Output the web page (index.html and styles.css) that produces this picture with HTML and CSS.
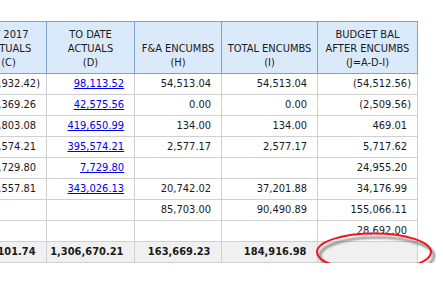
FILE: index.html
```html
<!DOCTYPE html>
<html lang="en">
<head>
    <meta charset="UTF-8" />
    <title>Budget Report</title>
    <link rel="stylesheet" href="styles.css">
</head>
<body>
    <div class="report">
        <table class="grid">
            <colgroup>
                <col class="c0">
                <col class="c1">
                <col class="c2">
                <col class="c3">
                <col class="c4">
            </colgroup>
            <thead>
                <tr>
                    <th>FY 2017<br>ACTUALS<br>(C)</th>
                    <th>TO DATE<br>ACTUALS<br>(D)</th>
                    <th>F&amp;A ENCUMBS<br>(H)</th>
                    <th>TOTAL ENCUMBS<br>(I)</th>
                    <th>BUDGET BAL<br>AFTER ENCUMBS<br>(J=A-D-I)</th>
                </tr>
            </thead>
            <tbody>
                <tr>
                    <td>(10,932.42)</td>
                    <td><a href="#">98,113.52</a><span class="sp">)</span></td>
                    <td>54,513.04<span class="sp">)</span></td>
                    <td>54,513.04<span class="sp">)</span></td>
                    <td>(54,512.56)</td>
                </tr>
                <tr>
                    <td>40,369.26<span class="sp">)</span></td>
                    <td><a href="#">42,575.56</a><span class="sp">)</span></td>
                    <td>0.00<span class="sp">)</span></td>
                    <td>0.00<span class="sp">)</span></td>
                    <td>(2,509.56)</td>
                </tr>
                <tr>
                    <td>19,803.08<span class="sp">)</span></td>
                    <td><a href="#">419,650.99</a><span class="sp">)</span></td>
                    <td>134.00<span class="sp">)</span></td>
                    <td>134.00<span class="sp">)</span></td>
                    <td>469.01<span class="sp">)</span></td>
                </tr>
                <tr>
                    <td>95,574.21<span class="sp">)</span></td>
                    <td><a href="#">395,574.21</a><span class="sp">)</span></td>
                    <td>2,577.17<span class="sp">)</span></td>
                    <td>2,577.17<span class="sp">)</span></td>
                    <td>5,717.62<span class="sp">)</span></td>
                </tr>
                <tr>
                    <td>7,729.80<span class="sp">)</span></td>
                    <td><a href="#">7,729.80</a><span class="sp">)</span></td>
                    <td></td>
                    <td></td>
                    <td>24,955.20<span class="sp">)</span></td>
                </tr>
                <tr>
                    <td>43,557.81<span class="sp">)</span></td>
                    <td><a href="#">343,026.13</a><span class="sp">)</span></td>
                    <td>20,742.02<span class="sp">)</span></td>
                    <td>37,201.88<span class="sp">)</span></td>
                    <td>34,176.99<span class="sp">)</span></td>
                </tr>
                <tr>
                    <td></td>
                    <td></td>
                    <td>85,703.00<span class="sp">)</span></td>
                    <td>90,490.89<span class="sp">)</span></td>
                    <td>155,066.11<span class="sp">)</span></td>
                </tr>
                <tr>
                    <td></td>
                    <td></td>
                    <td></td>
                    <td></td>
                    <td>28,692.00<span class="sp">)</span></td>
                </tr>
            </tbody>
            <tfoot>
                <tr>
                    <td>205,101.74<span class="sp">)</span></td>
                    <td>1,306,670.21<span class="sp">)</span></td>
                    <td>163,669.23<span class="sp">)</span></td>
                    <td>184,916.98<span class="sp">)</span></td>
                    <td></td>
                </tr>
            </tfoot>
        </table>

        <svg class="mark" width="130" height="48" viewBox="0 0 130 48">
            <defs>
                <filter id="soft" x="-10%" y="-20%" width="120%" height="150%">
                    <feGaussianBlur stdDeviation="1.3"/>
                </filter>
            </defs>
            <ellipse cx="60" cy="22" rx="57" ry="18.5" fill="none" stroke="#7d7d7d" stroke-width="2.2" filter="url(#soft)" transform="translate(3 3)"/>
            <ellipse cx="60" cy="21" rx="57" ry="18.5" fill="none" stroke="#f0141c" stroke-width="2"/>
        </svg>
    </div>
</body>
</html>
```

FILE: styles.css
```css
body {
    margin: 0;
    background-color: #ffffff;
    font-family: "DejaVu Sans", Tahoma, sans-serif;
    font-stretch: condensed;
    font-size: 11px;
    color: #1a1a1a;
    overflow: hidden;
}

.report {
    position: relative;
    padding-top: 21px;
    margin-left: -30px;
}

.grid {
    border-collapse: collapse;
    table-layout: fixed;
    width: 447px;
}

.c0 { width: 76px; }
.c1 { width: 88px; }
.c2 { width: 87px; }
.c3 { width: 96px; }
.c4 { width: 100px; }

.grid th {
    height: 48px;
    padding: 0 2px 3px;
    background-color: #dbeafb;
    border: 1px solid #7ba3cd;
    font-weight: normal;
    text-align: center;
    vertical-align: bottom;
    line-height: 14px;
}

.grid td {
    height: 20px;
    padding: 0 6px 0 2px;
    border: 1px solid #d0d0d0;
    text-align: right;
    white-space: nowrap;
    line-height: 20px;
}

.grid a {
    color: #0000ee;
    text-decoration: underline;
}

.sp {
    visibility: hidden;
}

.grid tfoot td {
    background-color: #f0f0f0;
    font-weight: bold;
}

.mark {
    position: absolute;
    left: 344px;
    top: 231px;
}
```
